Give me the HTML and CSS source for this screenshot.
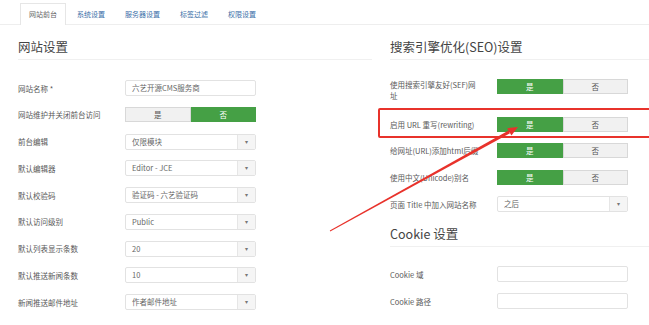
FILE: index.html
```html
<!DOCTYPE html>
<html lang="zh-CN">
<head>
    <meta charset="UTF-8">
    <title>全局设置</title>
    <link rel="stylesheet" href="styles.css">
</head>
<body>
    <ul class="tabs">
        <li class="active">网站前台</li>
        <li>系统设置</li>
        <li>服务器设置</li>
        <li>标签过滤</li>
        <li>权限设置</li>
    </ul>

    <div class="columns">
        <div class="col col-left">
            <h2>网站设置</h2>
            <div class="row"><label>网站名称 *</label><div class="input">六艺开源CMS服务商</div></div>
            <div class="row"><label>网站维护并关闭前台访问</label>
                <div class="toggle"><span>是</span><span class="on">否</span></div>
            </div>
            <div class="row"><label>前台编辑</label><div class="select"><span>仅限模块</span><i>▾</i></div></div>
            <div class="row"><label>默认编辑器</label><div class="select"><span>Editor - JCE</span><i>▾</i></div></div>
            <div class="row"><label>默认校验码</label><div class="select"><span>验证码 - 六艺验证码</span><i>▾</i></div></div>
            <div class="row"><label>默认访问级别</label><div class="select"><span>Public</span><i>▾</i></div></div>
            <div class="row"><label>默认列表显示条数</label><div class="select"><span>20</span><i>▾</i></div></div>
            <div class="row"><label>默认推送新闻条数</label><div class="select"><span>10</span><i>▾</i></div></div>
            <div class="row"><label>新闻推送邮件地址</label><div class="select"><span>作者邮件地址</span><i>▾</i></div></div>
        </div>

        <div class="col col-right">
            <h2>搜索引擎优化(SEO)设置</h2>
            <div class="row row-tall"><label>使用搜索引擎友好(SEF)网址</label>
                <div class="toggle"><span class="on">是</span><span>否</span></div>
            </div>
            <div class="row marked"><label>启用 URL 重写(rewriting)</label>
                <div class="toggle"><span class="on">是</span><span>否</span></div>
            </div>
            <div class="row"><label>给网址(URL)添加html后缀</label>
                <div class="toggle"><span class="on">是</span><span>否</span></div>
            </div>
            <div class="row"><label>使用中文(Unicode)别名</label>
                <div class="toggle"><span class="on">是</span><span>否</span></div>
            </div>
            <div class="row"><label>页面 Title 中加入网站名称</label><div class="select"><span>之后</span><i>▾</i></div></div>

            <h2 class="sub">Cookie 设置</h2>
            <div class="row"><label>Cookie 域</label><div class="input"></div></div>
            <div class="row"><label>Cookie 路径</label><div class="input"></div></div>
        </div>
    </div>

    <!-- annotation arrow -->
    <svg class="arrow" width="649" height="325" viewBox="0 0 649 325">
        <polygon points="330.2,231.4 329.8,230.6 508.6,130.4 510,133.2" fill="#e8322b"/>
        <polygon points="518,127 507.2,128.2 511.4,135.6" fill="#e8322b"/>
    </svg>
</body>
</html>
```

FILE: styles.css
```css
body {
    margin: 0;
    background: #fff;
    font-family: "Noto Sans CJK SC", "Liberation Sans", sans-serif;
    color: #555;
    width: 649px;
    height: 325px;
    overflow: hidden;
    position: relative;
}
.tabs {
    list-style: none;
    margin: 0;
    padding: 3px 0 0 20px;
    display: flex;
    border-bottom: 1px solid #eee;
    height: 21px;
}
.tabs li {
    font-size: 7px;
    line-height: 20px;
    padding: 0 8px;
    margin-right: 2px;
    color: #3a6fa8;
    border: 1px solid transparent;
    border-bottom: none;
}
.tabs li.active {
    color: #666;
    border-color: #e6e6e6;
    background: #fff;
    margin-bottom: -1px;
}
.columns {
    display: grid;
    grid-template-columns: 354px 259px;
    column-gap: 18px;
    padding-left: 18px;
}
h2 {
    font-weight: normal;
    font-size: 12.5px;
    color: #444;
    margin: 13px 0 0;
    line-height: 18px;
    padding-bottom: 3px;
    border-bottom: 1px solid #f0f0f0;
}
.col-left h2 { margin-bottom: 20px; }
.col-right h2 { margin-bottom: 19px; }
.col-right h2.sub {
    margin-top: 13px;
    margin-bottom: 19px;
}
.row {
    display: flex;
    align-items: center;
    height: 16px;
    margin-bottom: 10.75px;
    position: relative;
}
.row label {
    width: 107px;
    flex: none;
    font-size: 7.5px;
    line-height: 11px;
    padding-right: 14px;
    box-sizing: border-box;
    color: #595959;
}
.row-tall {
    align-items: flex-start;
    height: 22px;
    margin-bottom: 15px;
}
.input, .select {
    width: 131px;
    height: 16px;
    box-sizing: border-box;
    border: 1px solid #e2e2e2;
    border-radius: 2px;
    font-size: 7.5px;
    line-height: 14px;
    padding-left: 6px;
    color: #666;
}
.select {
    display: flex;
    justify-content: space-between;
}
.select i {
    font-style: normal;
    width: 17px;
    text-align: center;
    background: #f5f5f5;
    border-left: 1px solid #e6e6e6;
    font-size: 6px;
    color: #777;
}
.toggle {
    display: flex;
    width: 131px;
    height: 15px;
    font-size: 7.5px;
    line-height: 13px;
}
.toggle span {
    flex: 1;
    text-align: center;
    background: #f1f1f1;
    border: 1px solid #d8d8d8;
    color: #555;
}
.toggle span.on {
    background: #45a045;
    border-color: #45a045;
    color: #fff;
}
.marked::after {
    content: "";
    position: absolute;
    top: -8px;
    bottom: -6px;
    left: -12px;
    right: -11px;
    border: 2px solid #e8322b;
    border-radius: 2px;
    pointer-events: none;
}
.arrow {
    position: absolute;
    top: 0;
    left: 0;
    pointer-events: none;
}
```
